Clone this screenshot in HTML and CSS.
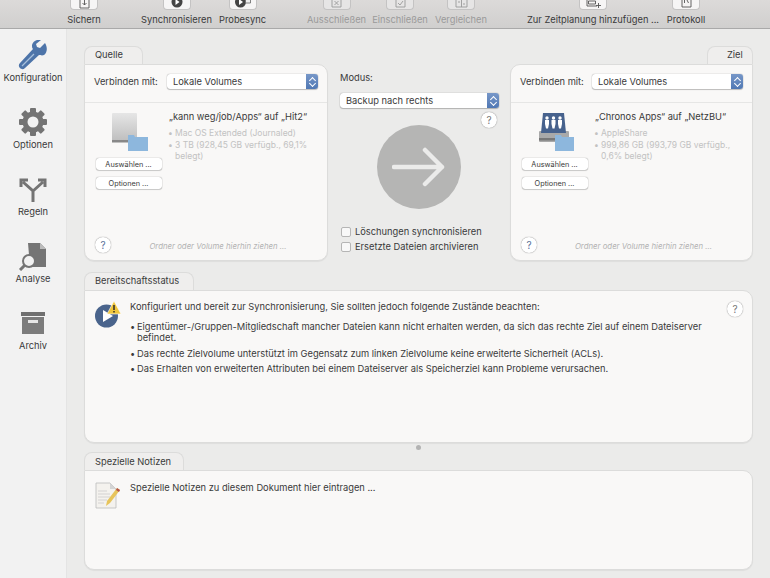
FILE: index.html
```html
<!DOCTYPE html>
<html lang="de">
<head>
<meta charset="utf-8">
<title>Chronosync</title>
<link rel="stylesheet" href="styles.css">
</head>
<body>
<div class="app">
  <header class="toolbar">
    <div class="tool t-save"><span class="tool-btn"><svg width="11" height="10" viewBox="0 0 11 10"><path d="M1 1v8h9V1M5.500 0v6M3.500 4l2 2 2-2" fill="none" stroke="#555" stroke-width=".9"/></svg></span><span>Sichern</span></div>
    <div class="tool t-sync"><span class="tool-btn"><svg width="12" height="10" viewBox="0 0 12 10"><circle cx="6" cy="3" r="5.500" fill="#444"/><path d="M4.500 0l4 3-4 3z" fill="#fff"/></svg></span><span>Synchronisieren</span></div>
    <div class="tool t-probe"><span class="tool-btn"><svg width="16" height="10" viewBox="0 0 16 10"><circle cx="5.500" cy="3" r="5.500" fill="#444"/><path d="M4 0l4 3-4 3z" fill="#fff"/><path d="M10.500 0h5v4h-5z" fill="#eee" stroke="#666" stroke-width=".8"/></svg></span><span>Probesync</span></div>
    <div class="tool off t-excl"><span class="tool-btn"><svg width="11" height="10" viewBox="0 0 11 10"><path d="M1 0v8h9V0M3.500 2l4 4M7.500 2l-4 4" fill="none" stroke="#999" stroke-width=".9"/></svg></span><span>Ausschließen</span></div>
    <div class="tool off t-incl"><span class="tool-btn"><svg width="11" height="10" viewBox="0 0 11 10"><path d="M1 0v8h9V0M3 4l2 2 3-4" fill="none" stroke="#999" stroke-width=".9"/></svg></span><span>Einschließen</span></div>
    <div class="tool off t-comp"><span class="tool-btn"><svg width="13" height="10" viewBox="0 0 13 10"><path d="M1 0v8h11V0M6.500 0v8M3 3h2M8 5h2" fill="none" stroke="#999" stroke-width=".9"/></svg></span><span>Vergleichen</span></div>
    <div class="tool t-plan"><span class="tool-btn"><svg width="15" height="10" viewBox="0 0 15 10"><path d="M1 0v7h10M2.500 2h7v3h-7zM12.500 4v5M10 6.500h5" fill="none" stroke="#555" stroke-width=".9"/></svg></span><span>Zur Zeitplanung hinzufügen ...</span></div>
    <div class="tool t-log"><span class="tool-btn"><svg width="11" height="10" viewBox="0 0 11 10"><path d="M1 0v8h9V0M3.500 1v3M6 1l1.500 3" fill="none" stroke="#555" stroke-width=".9"/></svg></span><span>Protokoll</span></div>
  </header>
  <div class="body">
    <nav class="sidebar">
      <div class="side-item">
        <svg class="side-icon" width="30" height="30" viewBox="0 0 30 30"><path d="M27 3l-5 5-3-1-1-3 5-4c-4-1-8 1-9 5 0 2 0 3 1 4L2 23c-2 2-1 4 0 5s3 2 5 0L21 15c1 0 3 1 5 0 3-2 4-7 1-12z" fill="#4d74a9"/><path d="M4 26L16 14" stroke="#a9c0dc" stroke-width="1.200"/></svg>
        <span>Konfiguration</span>
      </div>
      <div class="side-item">
        <svg class="side-icon" width="30" height="30" viewBox="0 0 30 30"><g fill="#747474"><circle cx="15" cy="15" r="10.500"/><rect x="12" y="1" width="6" height="28" rx="1"/><rect x="12" y="1" width="6" height="28" rx="1" transform="rotate(45 15 15)"/><rect x="12" y="1" width="6" height="28" rx="1" transform="rotate(90 15 15)"/><rect x="12" y="1" width="6" height="28" rx="1" transform="rotate(135 15 15)"/></g><circle cx="15" cy="15" r="5.500" fill="#f2f2f2"/></svg>
        <span>Optionen</span>
      </div>
      <div class="side-item">
        <svg class="side-icon" width="30" height="30" viewBox="0 0 30 30"><path d="M15 28V17L5 8M15 17l10-9M3 13V6h7M27 13V6h-7" fill="none" stroke="#747474" stroke-width="3"/></svg>
        <span>Regeln</span>
      </div>
      <div class="side-item">
        <svg class="side-icon" width="30" height="30" viewBox="0 0 30 30"><path d="M10 2h12l6 6v18H12z" fill="#757575"/><path d="M22 2v6h6z" fill="#bbb"/><circle cx="11" cy="20" r="6" fill="#f2f2f2" stroke="#757575" stroke-width="2"/><path d="M7 24l-5 5" stroke="#757575" stroke-width="3"/></svg>
        <span>Analyse</span>
      </div>
      <div class="side-item">
        <svg class="side-icon" width="30" height="30" viewBox="0 0 30 30"><path d="M3 4h24v4H3z" fill="#707070"/><path d="M4 9h22v17H4z" fill="#7c7c7c"/><path d="M10 12h10v3H10z" fill="#e6e6e6"/></svg>
        <span>Archiv</span>
      </div>
    </nav>
    <main class="main">
      <section class="sync-row">
        <div class="volume">
          <div class="tab tab-left tab-source">Quelle</div>
          <div class="card vol-card">
            <div class="connect"><span>Verbinden mit:</span><div class="select sel-connect"><span>Lokale Volumes</span><i class="stepper"></i></div></div>
            <div class="vol-info">
              <div class="vol-side">
                <svg class="vol-icon" width="38" height="38" viewBox="0 0 38 38"><defs><linearGradient id="hd" x1="0" y1="0" x2="0" y2="1"><stop offset="0" stop-color="#e6e6e6"/><stop offset="1" stop-color="#bdbdbd"/></linearGradient></defs><rect x="1" y="0" width="25" height="29" rx="1" fill="url(#hd)"/><rect x="1" y="27" width="25" height="2.500" fill="#888"/><path d="M17 22h6l1 2h13v14H17z" fill="#8db7dd"/></svg>
                <button class="mini-btn btn-first">Auswählen ...</button>
                <button class="mini-btn">Optionen ...</button>
              </div>
              <div class="vol-text">
                <p class="vol-title">„kann weg/job/Apps“ auf „Hit2“</p>
                <ul class="vol-meta"><li>Mac OS Extended (Journaled)</li><li>3 TB (928,45 GB verfügb., 69,1% belegt)</li></ul>
              </div>
            </div>
            <div class="vol-foot"><span class="help">?</span><em>Ordner oder Volume hierhin ziehen ...</em></div>
          </div>
        </div>
        <div class="mode">
          <label class="mode-label">Modus:</label>
          <div class="select sel-mode"><span>Backup nach rechts</span><i class="stepper"></i></div>
          <span class="help help-mode">?</span>
          <div class="arrow-circle"><svg width="54" height="40" viewBox="0 0 54 40"><path d="M2 20h48M33 3l17 17-17 17" fill="none" stroke="#ebebea" stroke-width="4.500" stroke-linecap="round" stroke-linejoin="round"/></svg></div>
          <label class="check check-first"><i class="box"></i>Löschungen synchronisieren</label>
          <label class="check"><i class="box"></i>Ersetzte Dateien archivieren</label>
        </div>
        <div class="volume">
          <div class="tab tab-right tab-target">Ziel</div>
          <div class="card vol-card">
            <div class="connect"><span>Verbinden mit:</span><div class="select sel-connect"><span>Lokale Volumes</span><i class="stepper"></i></div></div>
            <div class="vol-info">
              <div class="vol-side">
                <svg class="vol-icon" width="38" height="38" viewBox="0 0 38 38"><rect x="2" y="18" width="30" height="11" rx="1" fill="#a9a9a9"/><rect x="2" y="25" width="30" height="2.500" fill="#777"/><path d="M6 0h21l2 20H4z" fill="#47628d"/><g fill="#fff"><circle cx="10" cy="5" r="1.700"/><path d="M8 7h4v4l-1 4.500H9L8 11z"/><circle cx="16.500" cy="5" r="1.700"/><path d="M14.500 7h4v4l-1 4.500h-2l-1-4.500z"/><circle cx="23" cy="5" r="1.700"/><path d="M21 7h4v4l-1 4.500h-2l-1-4.500z"/></g><path d="M18 22h6l1 2h12v14H18z" fill="#8db7dd"/></svg>
                <button class="mini-btn btn-first">Auswählen ...</button>
                <button class="mini-btn">Optionen ...</button>
              </div>
              <div class="vol-text">
                <p class="vol-title">„Chronos Apps“ auf „NetzBU“</p>
                <ul class="vol-meta"><li>AppleShare</li><li>999,86 GB (993,79 GB verfügb., 0,6% belegt)</li></ul>
              </div>
            </div>
            <div class="vol-foot"><span class="help">?</span><em>Ordner oder Volume hierhin ziehen ...</em></div>
          </div>
        </div>
      </section>
      <section class="status">
        <div class="tab tab-left tab-status">Bereitschaftsstatus</div>
        <div class="card status-card">
          <svg class="msg-icon" width="26" height="27" viewBox="0 0 26 27"><circle cx="11.500" cy="15" r="11.500" fill="#4a648c"/><path d="M8 9l10 6-10 6z" fill="#fff"/><path d="M19 0l7 13H12z" fill="#f0c63c" stroke="#fff" stroke-width=".6"/><path d="M19 4v5M19 10v1.500" stroke="#222" stroke-width="1.400"/></svg>
          <div class="msg">
            <p class="msg-lead">Konfiguriert und bereit zur Synchronisierung, Sie sollten jedoch folgende Zustände beachten:</p>
            <ul class="msg-list">
              <li>Eigentümer-/Gruppen-Mitgliedschaft mancher Dateien kann nicht erhalten werden, da sich das rechte Ziel auf einem Dateiserver befindet.</li>
              <li>Das rechte Zielvolume unterstützt im Gegensatz zum linken Zielvolume keine erweiterte Sicherheit (ACLs).</li>
              <li>Das Erhalten von erweiterten Attributen bei einem Dateiserver als Speicherziel kann Probleme verursachen.</li>
            </ul>
          </div>
          <span class="help help-status">?</span>
        </div>
      </section>
      <div class="grip"></div>
      <section class="notes">
        <div class="tab tab-left tab-notes">Spezielle Notizen</div>
        <div class="card notes-card">
          <svg class="msg-icon" width="26" height="27" viewBox="0 0 26 27"><path d="M1 1h14l6 6v19H1z" fill="#f4f2ee" stroke="#bbb" stroke-width=".8"/><path d="M15 1l6 6h-6z" fill="#d4d4d4"/><path d="M3 9h9M3 12h12M3 15h12M3 18h9M3 21h6" stroke="#c5c5c5" stroke-width=".7"/><path d="M11 24l1-5 10-13 3 2-10 13z" fill="#e7c45b"/><path d="M22 6l3 2-1 2-3-2z" fill="#b5534a"/></svg>
          <p class="notes-text">Spezielle Notizen zu diesem Dokument hier eintragen ...</p>
        </div>
      </section>
    </main>
  </div>
</div>
</body>
</html>
```
FILE: styles.css
```css
* { box-sizing: border-box; }
html, body { margin: 0; height: 100%; }
body {
  font-family: Inter, "Liberation Sans", Arial, sans-serif;
  font-size: 9.300px;
  color: #3a3a3a;
  background: #ebebea;
  overflow: hidden;
}
.app { width: 770px; height: 578px; display: flex; flex-direction: column; overflow: hidden; }
p, ul { margin: 0; padding: 0; list-style: none; }

/* toolbar */
.toolbar {
  height: 29px;
  flex: none;
  display: flex;
  background: linear-gradient(#dcdad9, #d0cfce);
  border-bottom: 1px solid #a9a9a9;
  white-space: nowrap;
}
.tool { display: flex; flex-direction: column; align-items: center; height: 28px; }
.tool.off { color: #9a9a9a; }
.tool-btn {
  width: 28px;
  height: 10px;
  margin-bottom: 4px;
  background: #f6f5f5;
  border: 1px solid #c4c3c3;
  border-top: 0;
  border-radius: 0 0 4px 4px;
  display: flex;
  justify-content: center;
  align-items: flex-end;
  overflow: hidden;
}
.tool.off .tool-btn { background: #e6e5e5; }
.t-save { width: 34px; margin-left: 67px; }
.t-sync { width: 71px; margin-left: 40px; }
.t-probe { width: 47px; margin-left: 7px; }
.t-excl { width: 59px; margin-left: 41px; }
.t-incl { width: 56px; margin-left: 6px; }
.t-comp { width: 52px; margin-left: 7px; }
.t-plan { width: 132px; margin-left: 40px; }
.t-log { width: 40px; margin-left: 7px; }

/* layout */
.body { flex: 1; display: flex; min-height: 0; }
.sidebar {
  width: 67px;
  flex: none;
  padding-top: 11px;
  background: #f2f2f2;
  border-right: 1px solid #e4e4e4;
}
.side-item { height: 67px; display: flex; flex-direction: column; align-items: center; color: #3a3a3a; }
.side-icon { display: block; margin-bottom: 2px; }
.side-item span { line-height: 12px; white-space: nowrap; }
.main { flex: 1; padding: 17px 17px 0; min-width: 0; }
.sync-row { display: flex; height: 215px; }
.volume { width: 244px; flex: none; display: flex; flex-direction: column; }
.volume:last-child { width: 243px; }

/* tabs & cards */
.tab {
  height: 18px;
  line-height: 16px;
  padding: 0 0 0 10px;
  background: #efeeed;
  border: 1px solid #dcdcdb;
  border-bottom: 0;
  border-radius: 8px 8px 0 0;
  flex: none;
}
.tab-source { width: 59px; }
.tab-right { align-self: flex-end; width: 46px; padding-left: 19px; }
.tab-status { width: 110px; }
.tab-notes { width: 100px; padding-top: 1px; }
.card {
  background: #f9f8f7;
  border: 1px solid #dcdcdb;
  border-radius: 0 10px 10px 10px;
  box-shadow: 0 1px 1px rgba(0,0,0,.06);
}
.vol-card { flex: 1; display: flex; flex-direction: column; }
.volume:last-child .vol-card { border-radius: 10px 0 10px 10px; }
.connect {
  height: 38px;
  flex: none;
  display: flex;
  align-items: center;
  justify-content: space-between;
  padding: 0 9px 5px 9px;
  border-bottom: 1px solid #e6e6e5;
}
.select {
  height: 15px;
  display: flex;
  align-items: center;
  justify-content: space-between;
  padding-left: 6px;
  background: #fff;
  border-radius: 3px;
  box-shadow: 0 0 1px rgba(0,0,0,.5), 0 1px 1px rgba(0,0,0,.2);
}
.sel-connect { width: 151px; }
.sel-mode { width: 159px; margin-top: 9px; }
.stepper {
  position: relative;
  width: 12px;
  height: 15px;
  background: linear-gradient(#7797c8, #5078b4);
  border-radius: 0 3px 3px 0;
}
.stepper::before, .stepper::after {
  content: "";
  position: absolute;
  left: 4px;
  width: 4px;
  height: 4px;
  border-left: 1px solid #fff;
  border-top: 1px solid #fff;
  transform: rotate(45deg);
  top: 4px;
}
.stepper::after { transform: rotate(225deg); top: 7px; }
.vol-info { flex: 1; display: flex; padding: 10px 10px 0; min-height: 0; }
.vol-side { width: 67px; flex: none; display: flex; flex-direction: column; align-items: center; }
.vol-icon { display: block; margin: 0 0 7px 2px; }
.mini-btn {
  width: 66px;
  height: 12px;
  padding: 0;
  font: inherit;
  font-size: 7.300px;
  line-height: 11px;
  color: #3a3a3a;
  background: #fff;
  border: 0;
  border-radius: 3px;
  box-shadow: 0 0 1px rgba(0,0,0,.55), 0 1px 1px rgba(0,0,0,.15);
}
.btn-first { margin-bottom: 7px; }
.vol-text { padding: 0 0 0 7px; flex: 1; min-width: 0; }
.vol-title { line-height: 12px; margin: -2px 0 5px; white-space: nowrap; }
.vol-meta { color: #c2c2c2; font-size: 8.500px; line-height: 11.500px; padding-left: 6px; }
.vol-meta li { position: relative; }
.vol-meta li::before { content: "•"; position: absolute; left: -7px; }
.vol-foot { height: 34px; flex: none; display: flex; align-items: flex-start; padding: 11px 0 0 10px; }
.vol-foot em { flex: 1; text-align: center; color: #b3b3b3; font-size: 7.800px; line-height: 16px; padding: 1px 2px 0 0; }
.help {
  width: 16px;
  height: 16px;
  flex: none;
  display: block;
  text-align: center;
  line-height: 16px;
  font-size: 10px;
  color: #5a6f99;
  background: #fff;
  border-radius: 50%;
  box-shadow: 0 0 1px rgba(0,0,0,.6);
}

/* mode column */
.mode { flex: 1; display: flex; flex-direction: column; padding: 26px 0 0 12px; min-width: 0; }
.mode-label { line-height: 12px; }
.help-mode { margin: 4px 0 0 141px; color: #777; }
.arrow-circle {
  width: 84px;
  height: 84px;
  margin: -3px 0 0 37px;
  border-radius: 50%;
  background: #b5b5b4;
  display: flex;
  align-items: center;
  justify-content: center;
}
.check { display: flex; align-items: center; gap: 4px; height: 15px; white-space: nowrap; }
.check-first { margin-top: 15px; }
.box { width: 10px; height: 10px; flex: none; margin-left: 1px; background: #f8f8f8; border: 1px solid #b5b5b5; border-radius: 2px; }

/* status & notes */
.status { margin-top: 11px; }
.status-card { height: 153px; display: flex; padding: 10px 9px 0 10px; }
.msg-icon { flex: none; display: block; }
.msg { flex: 1; padding: 0 0 0 9px; line-height: 11px; min-width: 0; }
.msg-lead { padding-bottom: 9px; }
.msg-list { padding-left: 7px; }
.msg-list li { position: relative; padding-bottom: 4.500px; }
.msg-list li::before { content: "•"; position: absolute; left: -7px; }
.help-status { margin-left: 4px; color: #777; }
.grip { width: 5px; height: 5px; margin: 2px auto 0; border-radius: 50%; background: #b3b3b3; }
.notes { margin-top: 2px; }
.notes-card { height: 100px; display: flex; padding: 11px 0 0 10px; border-radius: 0 10px 10px 10px; }
.notes-text { padding: 0 0 0 9px; line-height: 11px; }
```
